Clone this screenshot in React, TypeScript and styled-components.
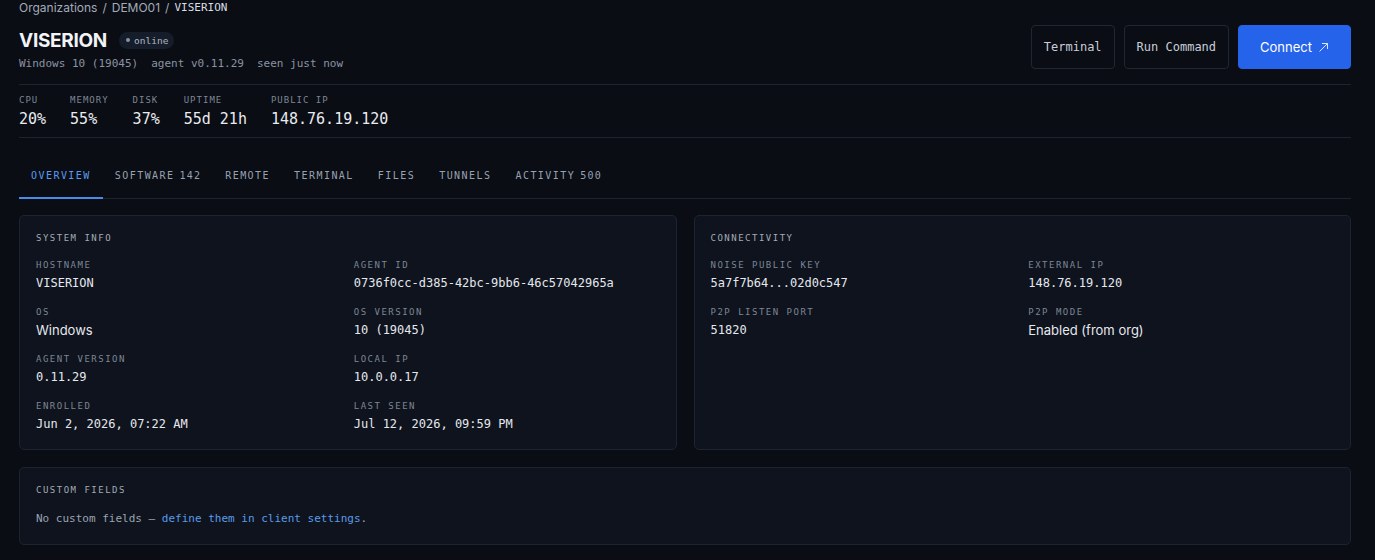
import React from 'react';
import styled, { createGlobalStyle } from 'styled-components';

const mono = `"DejaVu Sans Mono", "Liberation Mono", monospace`;
const sans = `Inter, "Noto Sans", sans-serif`;

const GlobalStyle = createGlobalStyle`
  html, body {
    margin: 0;
    padding: 0;
    background: #0a0d14;
    color: #e5e8ee;
    font-family: ${sans};
  }
`;

const Page = styled.div`
  padding: 0 24px 0 19px;
  min-height: 560px;
  box-sizing: border-box;
`;

const Breadcrumb = styled.div`
  display: flex;
  align-items: center;
  gap: 5px;
  height: 16px;
  font-size: 12px;
  line-height: 16px;
  color: #a3abb8;
`;

const Crumb = styled.span<{ $current?: boolean }>`
  font-family: ${({ $current }) => ($current ? mono : sans)};
  font-size: ${({ $current }) => ($current ? '11px' : '12px')};
  color: ${({ $current }) => ($current ? '#d9dde5' : '#a3abb8')};
`;

const Header = styled.div`
  display: flex;
  justify-content: space-between;
  align-items: flex-start;
  margin-top: 9px;
  padding-bottom: 12px;
  border-bottom: 1px solid #1c2331;
`;

const TitleBlock = styled.div`
  display: flex;
  flex-direction: column;
  gap: 1px;
`;

const TitleRow = styled.div`
  display: flex;
  align-items: center;
  gap: 12px;
  height: 30px;
`;

const Title = styled.h1`
  margin: 0;
  font-family: ${sans};
  font-weight: 700;
  font-size: 19px;
  color: #f1f3f7;
  letter-spacing: -0.3px;
`;

const Badge = styled.span`
  display: inline-flex;
  align-items: center;
  gap: 4px;
  height: 17px;
  padding: 0 6px 0 7px;
  border-radius: 9px;
  background: #161d2a;
  font-family: ${mono};
  font-size: 9.5px;
  color: #aeb6c3;
`;

const Dot = styled.span`
  width: 4px;
  height: 4px;
  border-radius: 50%;
  background: #8a93a3;
`;

const Meta = styled.div`
  display: flex;
  gap: 13px;
  font-family: ${mono};
  font-size: 11px;
  line-height: 16px;
  color: #8a93a3;
`;

const Actions = styled.div`
  display: flex;
  gap: 9px;
`;

const Button = styled.button<{ $primary?: boolean }>`
  height: 44px;
  padding: 0 ${({ $primary }) => ($primary ? '21px' : '12px')};
  border-radius: 4px;
  border: 1px solid ${({ $primary }) => ($primary ? '#2563eb' : '#1f2735')};
  background: ${({ $primary }) => ($primary ? '#2563eb' : '#0a0d14')};
  color: ${({ $primary }) => ($primary ? '#ffffff' : '#c9ced8')};
  font-family: ${({ $primary }) => ($primary ? sans : mono)};
  font-size: ${({ $primary }) => ($primary ? '13px' : '12px')};
  font-weight: 400;
  cursor: pointer;
  display: inline-flex;
  align-items: center;
  gap: 6px;
`;

const Stats = styled.div`
  display: flex;
  gap: 24px;
  padding: 9px 0 8px;
  border-bottom: 1px solid #1c2331;
`;

const Stat = styled.div`
  display: flex;
  flex-direction: column;
  gap: 3px;
`;

const StatLabel = styled.span`
  font-family: ${mono};
  font-size: 9px;
  line-height: 12px;
  letter-spacing: 1px;
  color: #7d8695;
`;

const StatValue = styled.span`
  font-family: ${mono};
  font-size: 15px;
  line-height: 20px;
  color: #e8ebf0;
`;

const Tabs = styled.div`
  display: flex;
  margin-top: 13px;
  border-bottom: 1px solid #1c2331;
`;

const Tab = styled.div<{ $active?: boolean }>`
  padding: 19px 12px 15px;
  margin-bottom: -1px;
  font-family: ${mono};
  font-size: 10px;
  line-height: 12px;
  letter-spacing: 1.45px;
  color: ${({ $active }) => ($active ? '#5b9bf0' : '#98a1b0')};
  border-bottom: 2px solid ${({ $active }) => ($active ? '#4a8ae8' : 'transparent')};
`;

const Count = styled.span`
  margin-left: 5px;
  letter-spacing: 1.2px;
`;

const Grid = styled.div`
  display: grid;
  grid-template-columns: 1fr 1fr;
  gap: 17px;
  margin-top: 16px;
`;

const Card = styled.section`
  background: #0e131d;
  border: 1px solid #1c2432;
  border-radius: 5px;
  padding: 16px 16px 17px;
`;

const FullCard = styled(Card)`
  margin-top: 17px;
`;

const CardTitle = styled.h2`
  margin: 0 0 15px;
  font-family: ${mono};
  font-size: 9px;
  line-height: 12px;
  font-weight: 400;
  letter-spacing: 1.5px;
  color: #a3abb8;
`;

const Fields = styled.div`
  display: grid;
  grid-template-columns: 1fr 1fr;
  column-gap: 12px;
  row-gap: 15px;
`;

const Field = styled.div`
  display: flex;
  flex-direction: column;
  gap: 4px;
`;

const FieldLabel = styled.span`
  font-family: ${mono};
  font-size: 9px;
  line-height: 12px;
  letter-spacing: 1.5px;
  color: #7d8695;
`;

const FieldValue = styled.span<{ $sans?: boolean }>`
  font-family: ${({ $sans }) => ($sans ? sans : mono)};
  font-size: ${({ $sans }) => ($sans ? '13px' : '12px')};
  line-height: 16px;
  color: #e5e8ee;
`;

const Note = styled.p`
  margin: 0;
  font-family: ${mono};
  font-size: 11px;
  line-height: 16px;
  color: #9aa3b1;
`;

const NoteLink = styled.a`
  color: #5b9be8;
  text-decoration: none;
`;

type Item = { label: string; value: string; sans?: boolean };

const systemInfo: Item[] = [
  { label: 'HOSTNAME', value: 'VISERION' },
  { label: 'AGENT ID', value: '0736f0cc-d385-42bc-9bb6-46c57042965a' },
  { label: 'OS', value: 'Windows', sans: true },
  { label: 'OS VERSION', value: '10 (19045)' },
  { label: 'AGENT VERSION', value: '0.11.29' },
  { label: 'LOCAL IP', value: '10.0.0.17' },
  { label: 'ENROLLED', value: 'Jun 2, 2026, 07:22 AM' },
  { label: 'LAST SEEN', value: 'Jul 12, 2026, 09:59 PM' },
];

const connectivity: Item[] = [
  { label: 'NOISE PUBLIC KEY', value: '5a7f7b64...02d0c547' },
  { label: 'EXTERNAL IP', value: '148.76.19.120' },
  { label: 'P2P LISTEN PORT', value: '51820' },
  { label: 'P2P MODE', value: 'Enabled (from org)', sans: true },
];

const stats = [
  { label: 'CPU', value: '20%' },
  { label: 'MEMORY', value: '55%' },
  { label: 'DISK', value: '37%' },
  { label: 'UPTIME', value: '55d 21h' },
  { label: 'PUBLIC IP', value: '148.76.19.120' },
];

const tabs: { name: string; count?: number }[] = [
  { name: 'OVERVIEW' },
  { name: 'SOFTWARE', count: 142 },
  { name: 'REMOTE' },
  { name: 'TERMINAL' },
  { name: 'FILES' },
  { name: 'TUNNELS' },
  { name: 'ACTIVITY', count: 500 },
];

const InfoCard: React.FC<{ title: string; items: Item[] }> = ({ title, items }) => (
  <Card>
    <CardTitle>{title}</CardTitle>
    <Fields>
      {items.map((it) => (
        <Field key={it.label}>
          <FieldLabel>{it.label}</FieldLabel>
          <FieldValue $sans={it.sans}>{it.value}</FieldValue>
        </Field>
      ))}
    </Fields>
  </Card>
);

const ArrowUpRight = () => (
  <svg width="11" height="11" viewBox="0 0 11 11" fill="none" stroke="#dbe6ff" strokeWidth="1">
    <path d="M1.5 9.5 L9.5 1.5" />
    <path d="M4 1.5 H9.5 V7" />
  </svg>
);

export default function App() {
  return (
    <>
      <GlobalStyle />
      <Page>
        <Breadcrumb>
          <Crumb>Organizations</Crumb>
          <span>/</span>
          <Crumb>DEMO01</Crumb>
          <span>/</span>
          <Crumb $current>VISERION</Crumb>
        </Breadcrumb>

        <Header>
          <TitleBlock>
            <TitleRow>
              <Title>VISERION</Title>
              <Badge>
                <Dot />
                online
              </Badge>
            </TitleRow>
            <Meta>
              <span>Windows 10 (19045)</span>
              <span>agent v0.11.29</span>
              <span>seen just now</span>
            </Meta>
          </TitleBlock>
          <Actions>
            <Button>Terminal</Button>
            <Button>Run Command</Button>
            <Button $primary>
              Connect <ArrowUpRight />
            </Button>
          </Actions>
        </Header>

        <Stats>
          {stats.map((s) => (
            <Stat key={s.label}>
              <StatLabel>{s.label}</StatLabel>
              <StatValue>{s.value}</StatValue>
            </Stat>
          ))}
        </Stats>

        <Tabs>
          {tabs.map((t, i) => (
            <Tab key={t.name} $active={i === 0}>
              {t.name}
              {t.count !== undefined && <Count>{t.count}</Count>}
            </Tab>
          ))}
        </Tabs>

        <Grid>
          <InfoCard title="SYSTEM INFO" items={systemInfo} />
          <InfoCard title="CONNECTIVITY" items={connectivity} />
        </Grid>

        <FullCard>
          <CardTitle>CUSTOM FIELDS</CardTitle>
          <Note>
            No custom fields — <NoteLink href="#">define them in client settings</NoteLink>.
          </Note>
        </FullCard>
      </Page>
    </>
  );
}
